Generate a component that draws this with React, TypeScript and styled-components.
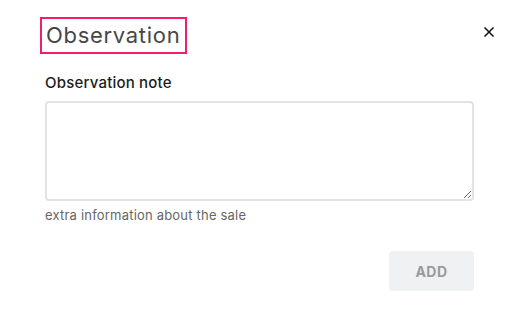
import React from "react";
import styled, { createGlobalStyle } from "styled-components";

const Global = createGlobalStyle`
  html, body { margin: 0; padding: 0; background: #fff; }
  body { font-family: "Inter", "Liberation Sans", sans-serif; }
  * { box-sizing: border-box; }
`;

const Dialog = styled.div`
  width: 521px;
  height: 320px;
  background: #fff;
  padding: 17px 48px 0 40px;
  display: flex;
  flex-direction: column;
`;

const Header = styled.div`
  display: flex;
  justify-content: space-between;
  align-items: flex-start;
`;

const Title = styled.h2`
  margin: 0;
  border: 2px solid #ef1f6c;
  padding: 0 5px 0 4px;
  height: 37px;
  line-height: 33px;
  font-size: 22px;
  font-weight: 400;
  color: #474747;
  letter-spacing: 0.7px;
`;

const Close = styled.button`
  border: none;
  background: none;
  padding: 0;
  width: 12px;
  height: 12px;
  margin-top: 9px;
  margin-right: -22px;
  display: flex;
  align-items: center;
  justify-content: center;
  cursor: pointer;
`;

const Body = styled.div`
  padding-left: 5px;
  display: flex;
  flex-direction: column;
`;

const Label = styled.label`
  margin-top: 19px;
  font-size: 15px;
  line-height: 20px;
  font-weight: 450;
  letter-spacing: 0.2px;
  color: #1c1c1c;
`;

const TextArea = styled.textarea`
  margin-top: 8px;
  width: 429px;
  height: 100px;
  border: 2px solid #e3e3e3;
  border-radius: 4px;
  resize: vertical;
  font-family: inherit;
  outline: none;
`;

const Helper = styled.div`
  margin-top: 5px;
  font-size: 13px;
  line-height: 18px;
  letter-spacing: 0.2px;
  color: #666;
`;

const Footer = styled.div`
  display: flex;
  justify-content: flex-end;
  margin-top: 27px;
  margin-right: -1px;
`;

const AddButton = styled.button`
  width: 85px;
  height: 40px;
  border: none;
  border-radius: 4px;
  background: #f0f1f3;
  color: #9a9a9a;
  font-family: inherit;
  font-size: 14px;
  font-weight: 700;
  letter-spacing: 0.5px;
`;

export default function App() {
  return (
    <>
      <Global />
      <Dialog>
        <Header>
          <Title>Observation</Title>
          <Close aria-label="close">
            <svg width="10" height="10" viewBox="0 0 10 10">
              <path d="M0.5 0.5 L9.5 9.5 M9.5 0.5 L0.5 9.5" stroke="#111" strokeWidth="1.5" />
            </svg>
          </Close>
        </Header>
        <Body>
          <Label>Observation note</Label>
          <TextArea />
          <Helper>extra information about the sale</Helper>
          <Footer>
            <AddButton disabled>ADD</AddButton>
          </Footer>
        </Body>
      </Dialog>
    </>
  );
}
